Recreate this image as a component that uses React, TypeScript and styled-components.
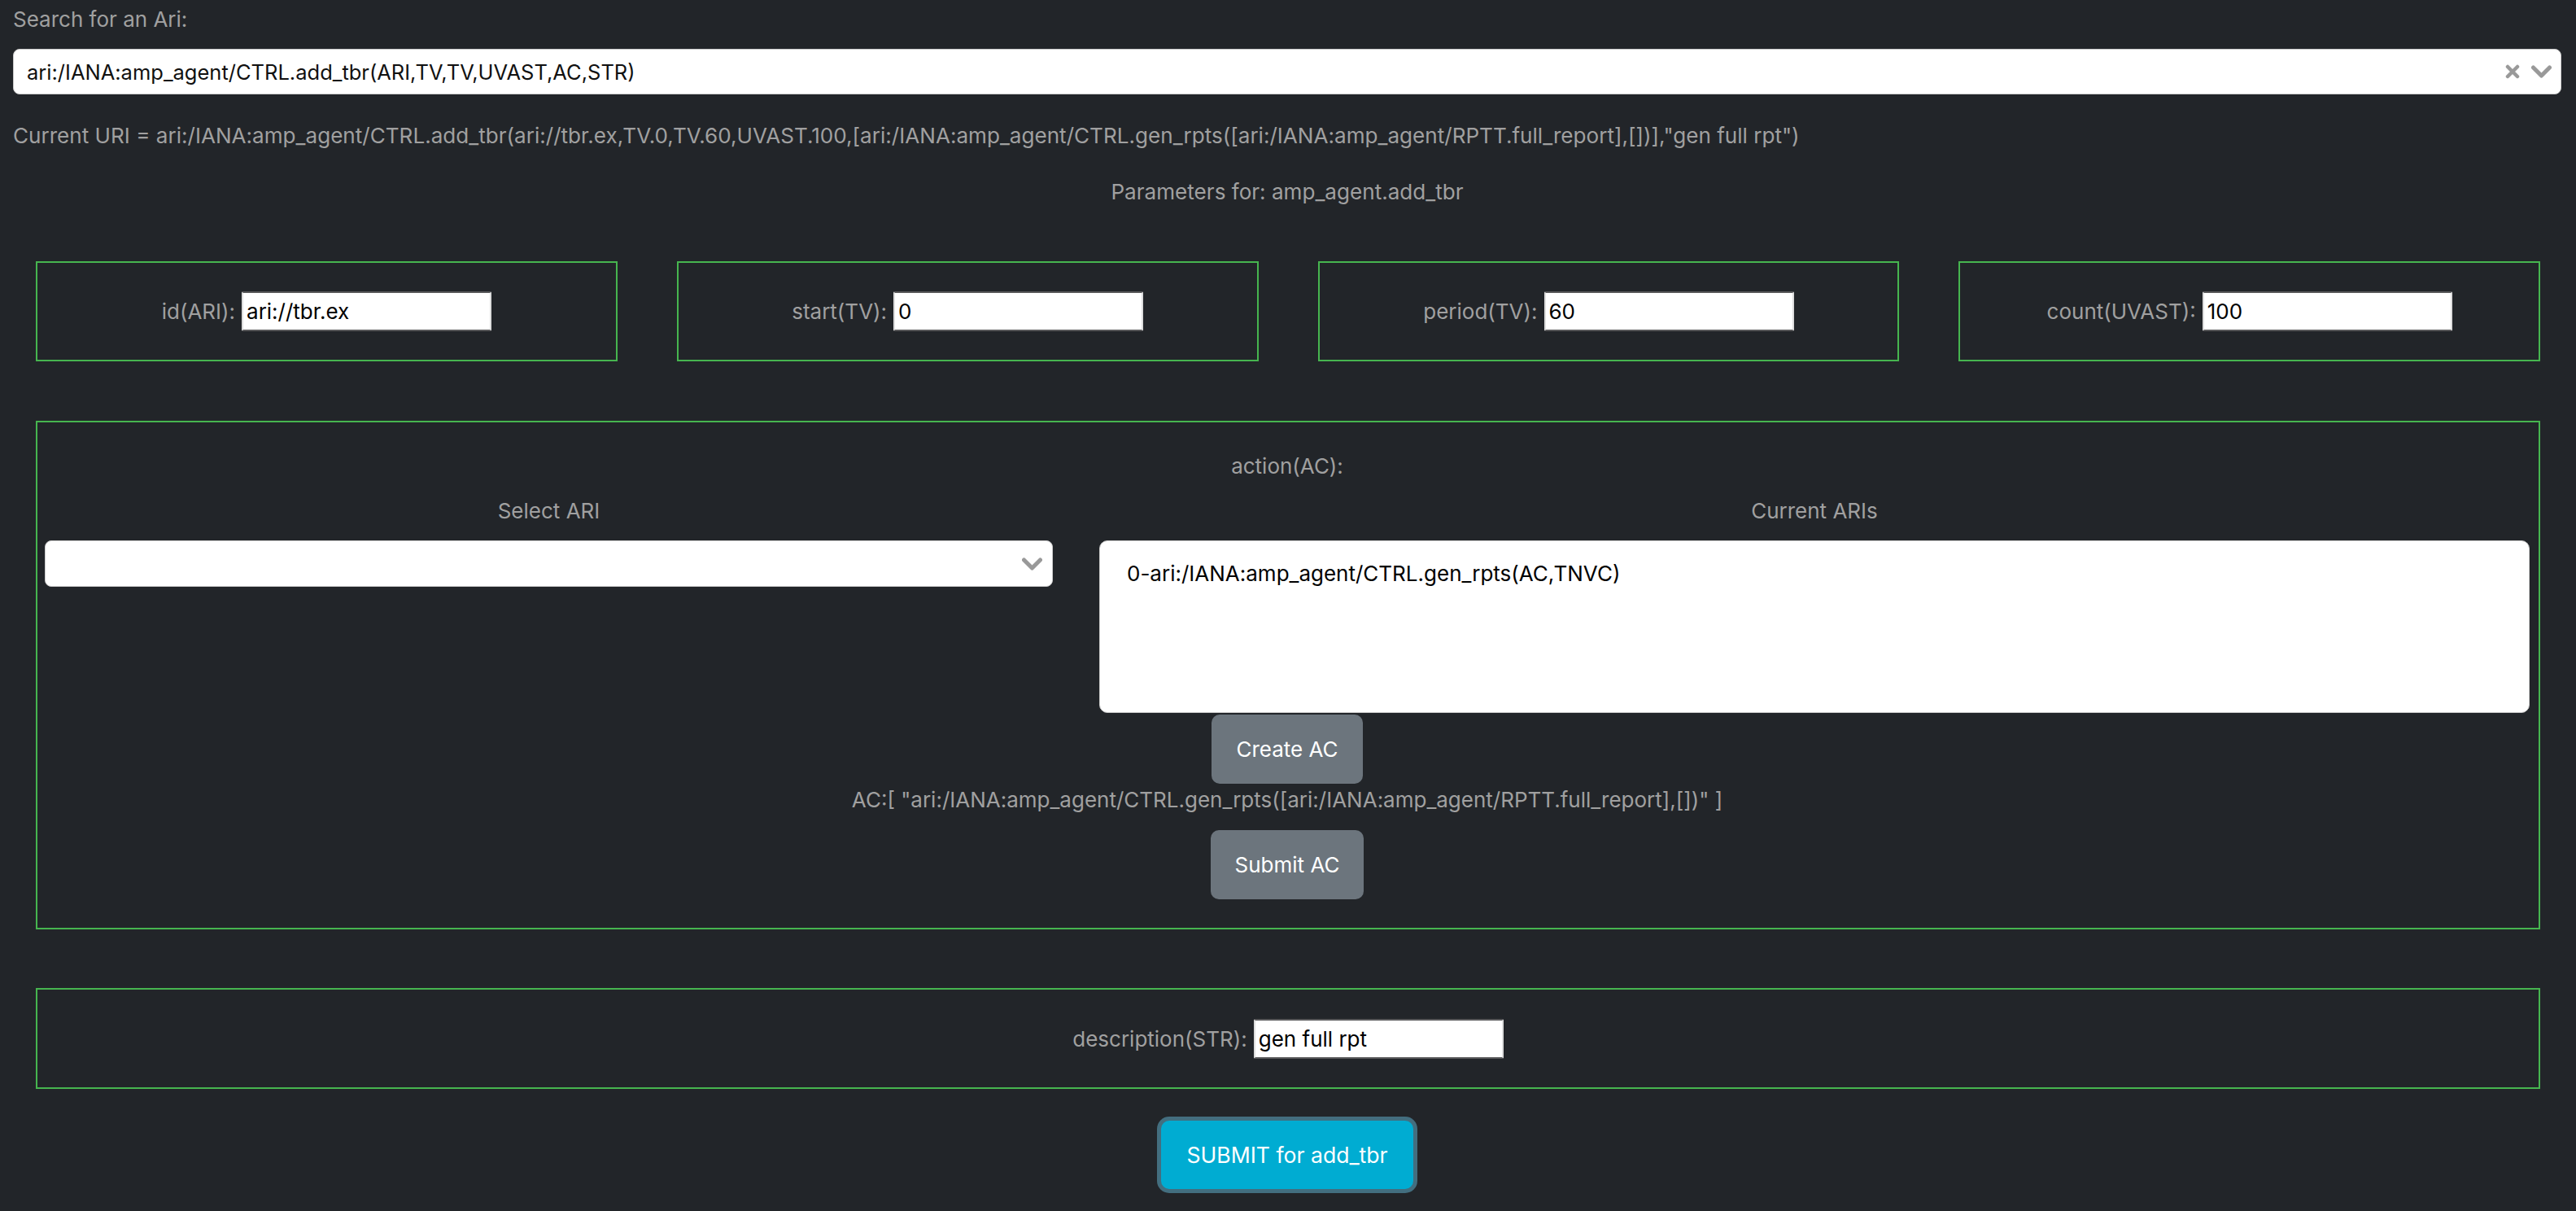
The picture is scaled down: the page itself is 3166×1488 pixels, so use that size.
import React from "react";
import styled, { createGlobalStyle } from "styled-components";

const Global = createGlobalStyle`
  html, body { margin: 0; padding: 0; background: #222529; }
  body { font-family: Inter, "Noto Sans", sans-serif; color: #a0a0a0; }
  * { box-sizing: border-box; }
`;

const Page = styled.div`
  background: #222529;
  min-height: 1488px;
  padding: 6px 18px 0 16px;
  display: flex;
  flex-direction: column;
`;

const SearchLabel = styled.div`
  font-size: 26px;
  line-height: 36px;
  color: #a0a0a0;
`;

const SearchBox = styled.div`
  margin-top: 18px;
  height: 56px;
  background: #fff;
  border: 1px solid #cccccc;
  border-radius: 8px;
  display: flex;
  align-items: center;
  padding: 0 11px 0 16px;
`;

const SearchValue = styled.div`
  flex: 1;
  font-size: 25.5px;
  color: #111;
`;

const IconWrap = styled.div`
  display: flex;
  align-items: center;
  gap: 14px;
  color: #999;
`;

const InfoLine = styled.div<{ $center?: boolean; $top: number }>`
  margin-top: ${(p) => p.$top}px;
  font-size: 26.1px;
  line-height: 40px;
  color: #a0a0a0;
  text-align: ${(p) => (p.$center ? "center" : "left")};
  white-space: nowrap;
`;

const ParamRow = styled.div`
  margin: 65px 26px 0 28px;
  display: grid;
  grid-template-columns: repeat(4, 1fr);
  column-gap: 73px;
`;

const GreenBox = styled.div<{ $height?: number }>`
  border: 2px solid #46b54f;
  ${(p) => (p.$height ? `height: ${p.$height}px;` : "")}
`;

const ParamBox = styled(GreenBox)`
  display: flex;
  align-items: center;
  justify-content: center;
  gap: 8px;
`;

const FieldLabel = styled.span`
  font-size: 26px;
  color: #a0a0a0;
`;

const TextInput = styled.div`
  width: 307px;
  height: 49px;
  background: #fff;
  border: 2px solid #58585a;
  border-left-color: #ddd;
  border-right-color: #ddd;
  border-radius: 2px;
  display: flex;
  align-items: center;
  padding-left: 4px;
  font-size: 26px;
  color: #000;
`;

const ActionBox = styled(GreenBox)`
  margin: 73px 26px 0 28px;
  padding: 34px 11px 35px 9px;
  display: flex;
  flex-direction: column;
  align-items: stretch;
`;

const ActionTitle = styled.div`
  text-align: center;
  font-size: 26px;
  line-height: 40px;
`;

const Columns = styled.div`
  margin-top: 15px;
  display: grid;
  grid-template-columns: 1239fr 1758fr;
  column-gap: 57px;
`;

const Column = styled.div`
  display: flex;
  flex-direction: column;
  gap: 16px;
`;

const ColLabel = styled.div`
  text-align: center;
  font-size: 26px;
  line-height: 40px;
`;

const SelectBox = styled.div`
  height: 57px;
  background: #fff;
  border: 1px solid #cccccc;
  border-radius: 8px;
  display: flex;
  align-items: center;
  justify-content: flex-end;
  padding-right: 12px;
  color: #999;
`;

const TextArea = styled.div`
  height: 212px;
  background: #fff;
  border: 1px solid #cccccc;
  border-radius: 10px;
  padding: 22px 33px;
  font-size: 26px;
  line-height: 36px;
  color: #000;
`;

const Centered = styled.div<{ $top?: number }>`
  display: flex;
  flex-direction: column;
  align-items: center;
  margin-top: ${(p) => p.$top ?? 0}px;
`;

const GrayButton = styled.button<{ $top?: number }>`
  margin-top: ${(p) => p.$top ?? 0}px;
  height: 85px;
  padding: 0 30px;
  background: #6c757d;
  border: none;
  border-radius: 10px;
  color: #fff;
  font-family: Inter, "Noto Sans", sans-serif;
  font-size: 26px;
`;

const ACLine = styled.div`
  font-size: 26px;
  line-height: 40px;
  white-space: nowrap;
`;

const DescBox = styled(ParamBox)`
  margin: 72px 26px 0 28px;
  height: 124px;
`;

const SubmitButton = styled.button`
  align-self: center;
  margin-top: 39px;
  height: 84px;
  padding: 0 31px;
  background: #00acd2;
  border: none;
  border-radius: 10px;
  box-shadow: 0 0 0 5px #436e7f;
  color: #fff;
  font-family: Inter, "Noto Sans", sans-serif;
  font-size: 26.6px;
`;

const Chevron = ({ w = 25 }: { w?: number }) => (
  <svg width={w} height={16} viewBox="0 0 25 16" fill="none">
    <path d="M2.5 3 L12.5 13 L22.5 3" stroke="#999" strokeWidth="5" strokeLinecap="round" strokeLinejoin="round" />
  </svg>
);

const Cross = () => (
  <svg width={18} height={18} viewBox="0 0 18 18" fill="none">
    <path d="M3 3 L15 15 M15 3 L3 15" stroke="#999" strokeWidth="4.5" strokeLinecap="round" />
  </svg>
);

const params = [
  { label: "id(ARI):", value: "ari://tbr.ex" },
  { label: "start(TV):", value: "0" },
  { label: "period(TV):", value: "60" },
  { label: "count(UVAST):", value: "100" },
];

export default function App() {
  return (
    <>
      <Global />
      <Page>
        <SearchLabel>Search for an Ari:</SearchLabel>
        <SearchBox>
          <SearchValue>ari:/IANA:amp_agent/CTRL.add_tbr(ARI,TV,TV,UVAST,AC,STR)</SearchValue>
          <IconWrap>
            <Cross />
            <Chevron />
          </IconWrap>
        </SearchBox>
        <InfoLine $top={31}>
          Current URI = ari:/IANA:amp_agent/CTRL.add_tbr(ari://tbr.ex,TV.0,TV.60,UVAST.100,[ari:/IANA:amp_agent/CTRL.gen_rpts([ari:/IANA:amp_agent/RPTT.full_report],[])],"gen full rpt")
        </InfoLine>
        <InfoLine $top={29} $center>
          Parameters for: amp_agent.add_tbr
        </InfoLine>
        <ParamRow>
          {params.map((p) => (
            <ParamBox key={p.label} $height={123}>
              <FieldLabel>{p.label}</FieldLabel>
              <TextInput>{p.value}</TextInput>
            </ParamBox>
          ))}
        </ParamRow>
        <ActionBox>
          <ActionTitle>action(AC):</ActionTitle>
          <Columns>
            <Column>
              <ColLabel>Select ARI</ColLabel>
              <SelectBox>
                <Chevron w={25} />
              </SelectBox>
            </Column>
            <Column>
              <ColLabel>Current ARIs</ColLabel>
              <TextArea>0-ari:/IANA:amp_agent/CTRL.gen_rpts(AC,TNVC)</TextArea>
            </Column>
          </Columns>
          <Centered $top={2}>
            <GrayButton>Create AC</GrayButton>
            <ACLine>AC:[ "ari:/IANA:amp_agent/CTRL.gen_rpts([ari:/IANA:amp_agent/RPTT.full_report],[])" ]</ACLine>
            <GrayButton $top={17}>Submit AC</GrayButton>
          </Centered>
        </ActionBox>
        <DescBox>
          <FieldLabel>description(STR):</FieldLabel>
          <TextInput>gen full rpt</TextInput>
        </DescBox>
        <SubmitButton>SUBMIT for add_tbr</SubmitButton>
      </Page>
    </>
  );
}
